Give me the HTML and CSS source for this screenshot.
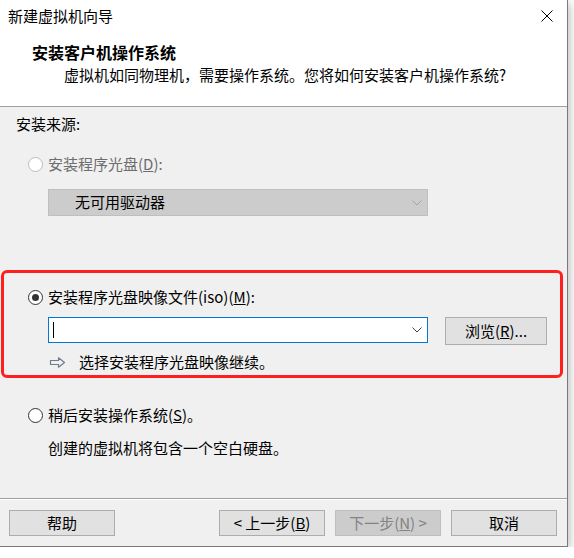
FILE: index.html
```html
<!DOCTYPE html>
<html lang="zh-CN">
<head>
    <meta charset="UTF-8">
    <meta name="viewport" content="width=device-width, initial-scale=1.0">
    <title>新建虚拟机向导</title>
    <link rel="stylesheet" href="styles.css">
</head>
<body>
    <div class="window">
        <div class="top">
            <div class="titlebar">
                <span class="title">新建虚拟机向导</span>
                <svg class="close" width="12" height="12" viewBox="0 0 12 12">
                    <path d="M0.5 0.5 L11.5 11.5 M11.5 0.5 L0.5 11.5" stroke="#000" stroke-width="1" fill="none"/>
                </svg>
            </div>
            <div class="header">
                <h1 class="heading">安装客户机操作系统</h1>
                <p class="subtitle">虚拟机如同物理机，需要操作系统。您将如何安装客户机操作系统?</p>
            </div>
        </div>

        <div class="content">
            <div class="section-label">安装来源:</div>

            <div class="option disabled">
                <span class="radio"></span>
                <span>安装程序光盘(<u>D</u>):</span>
            </div>
            <div class="select select-disabled">
                <span class="select-text">无可用驱动器</span>
                <svg width="10" height="6" viewBox="0 0 10 6">
                    <path d="M0.5 0.5 L5 5 L9.5 0.5" stroke="#a3a3a3" stroke-width="1" fill="none"/>
                </svg>
            </div>

            <div class="highlight">
                <div class="option">
                    <span class="radio checked"></span>
                    <span>安装程序光盘映像文件(iso)(<u>M</u>):</span>
                </div>
                <div class="file-row">
                    <div class="select select-input">
                        <span class="caret"></span>
                        <svg width="10" height="6" viewBox="0 0 10 6">
                            <path d="M0.5 0.5 L5 5 L9.5 0.5" stroke="#444" stroke-width="1" fill="none"/>
                        </svg>
                    </div>
                    <button class="btn browse">浏览(<u>R</u>)...</button>
                </div>
                <div class="hint">
                    <svg width="17" height="11" viewBox="0 0 17 11">
                        <path d="M1.5 3.5 H9.5 V0.8 L15.5 5.5 L9.5 10.2 V7.5 H1.5 Z" stroke="#6f7c8c" stroke-width="1.2" fill="none" stroke-linejoin="round"/>
                    </svg>
                    <span>选择安装程序光盘映像继续。</span>
                </div>
            </div>

            <div class="option later">
                <span class="radio"></span>
                <span>稍后安装操作系统(<u>S</u>)。</span>
            </div>
            <div class="note">创建的虚拟机将包含一个空白硬盘。</div>
        </div>

        <div class="footer">
            <button class="btn">帮助</button>
            <span class="spacer"></span>
            <button class="btn">&lt; 上一步(<u>B</u>)</button>
            <button class="btn" disabled>下一步(<u>N</u>) &gt;</button>
            <button class="btn">取消</button>
        </div>
    </div>
</body>
</html>
```

FILE: styles.css
```css
* {
    box-sizing: border-box;
}

body {
    margin: 0;
    background-color: #fff;
    font-family: "Noto Sans CJK SC", "Noto Sans", sans-serif;
    font-size: 15px;
    color: #000;
}

.window {
    width: 568px;
    height: 547px;
    background-color: #f0f0f0;
    border-right: 1px solid #7a7a7a;
    border-bottom: 1px solid #7a7a7a;
    box-shadow: 1px 3px 10px rgba(0, 0, 0, 0.3);
    display: flex;
    flex-direction: column;
}

/* title bar + page header */
.top {
    background-color: #fff;
    border-bottom: 1px solid #a0a0a0;
}

.titlebar {
    height: 32px;
    display: flex;
    align-items: center;
    justify-content: space-between;
    padding: 0 14px 0 8px;
}

.title {
    line-height: 20px;
}

.header {
    padding: 10px 0 21px 32px;
}

.heading {
    margin: 0;
    font-size: 16px;
    font-weight: bold;
    line-height: 20px;
}

.subtitle {
    margin: 3px 0 0 32px;
    line-height: 20px;
}

/* body */
.content {
    padding-top: 7px;
}

.section-label {
    padding-left: 16px;
    line-height: 20px;
}

.option {
    display: flex;
    align-items: center;
    gap: 5px;
    line-height: 20px;
    margin-top: 20px;
    padding-left: 28px;
}

.option.disabled {
    color: #6d6d6d;
}

.radio {
    flex: none;
    position: relative;
    width: 15px;
    height: 15px;
    border: 1px solid #333;
    border-radius: 50%;
    background-color: #fff;
}

.disabled .radio {
    border-color: #bcbcbc;
}

.radio.checked::after {
    content: "";
    position: absolute;
    inset: 3px;
    border-radius: 50%;
    background-color: #333;
}

.select {
    width: 380px;
    display: flex;
    align-items: center;
    justify-content: space-between;
    border: 1px solid;
}

.select-disabled {
    height: 27px;
    margin: 15px 0 0 48px;
    padding: 0 5px 0 26px;
    background-color: #cccccc;
    border-color: #bfbfbf;
}

.select-text {
    line-height: 20px;
    margin-top: -2px;
}

.select-input {
    height: 26px;
    padding: 0 5px 0 4px;
    background-color: #fff;
    border-color: #0078d7;
}

.caret {
    width: 1px;
    height: 16px;
    background-color: #000;
}

.highlight {
    margin: 54px 0 0 1px;
    width: 562px;
    height: 108px;
    border: 3px solid #ff1f1f;
    border-radius: 6px;
    padding: 14px 0 0 24px;
}

.highlight .option {
    margin-top: 0;
    padding-left: 0;
}

.file-row {
    display: flex;
    align-items: flex-start;
    margin-top: 10px;
    padding-left: 20px;
}

.hint {
    display: flex;
    align-items: center;
    gap: 13px;
    margin-top: 7px;
    padding-left: 21px;
    line-height: 20px;
}

.option.later {
    margin-top: 27px;
}

.note {
    margin: 13px 0 0 48px;
    line-height: 20px;
}

/* buttons */
.btn {
    width: 106px;
    height: 26px;
    padding: 0 0 1px;
    border: 1px solid #adadad;
    background-color: #e1e1e1;
    font-family: inherit;
    font-size: 15px;
    color: #000;
    line-height: 20px;
}

.btn:disabled {
    background-color: #cccccc;
    border-color: #bfbfbf;
    color: #838383;
}

.browse {
    width: 102px;
    height: 28px;
    margin-left: 17px;
}

.footer {
    margin-top: auto;
    display: flex;
    gap: 10px;
    padding: 11px 10px 10px 9px;
    border-top: 1px solid #a0a0a0;
    box-shadow: inset 0 1px #fff;
}

.spacer {
    flex: 1;
}
```
